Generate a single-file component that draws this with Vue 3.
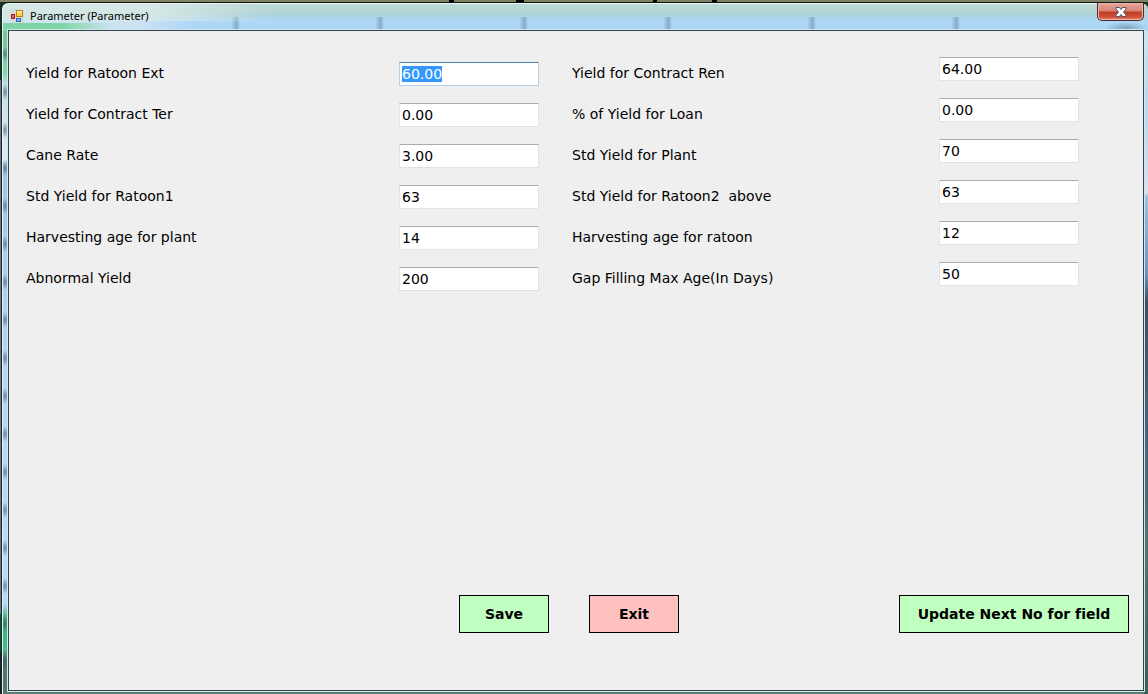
<script setup>
import { onMounted, reactive } from 'vue'

const fields = reactive([
  { id: 'ratoon-ext', label: 'Yield for Ratoon Ext', value: '60.00' },
  { id: 'contract-ren', label: 'Yield for Contract Ren', value: '64.00' },
  { id: 'contract-ter', label: 'Yield for Contract Ter', value: '0.00' },
  { id: 'loan', label: '% of Yield for Loan', value: '0.00' },
  { id: 'cane-rate', label: 'Cane Rate', value: '3.00' },
  { id: 'std-plant', label: 'Std Yield for Plant', value: '70' },
  { id: 'std-ratoon1', label: 'Std Yield for Ratoon1', value: '63' },
  { id: 'std-ratoon2', label: 'Std Yield for Ratoon2  above', value: '63' },
  { id: 'age-plant', label: 'Harvesting age for plant', value: '14' },
  { id: 'age-ratoon', label: 'Harvesting age for ratoon', value: '12' },
  { id: 'abnormal', label: 'Abnormal Yield', value: '200' },
  { id: 'gap-age', label: 'Gap Filling Max Age(In Days)', value: '50' },
])

// The first field opens focused with its value selected.
onMounted(() => {
  const first = document.getElementById(fields[0].id)
  first.focus()
  first.select()
})
</script>

<template>
  <div class="desktop">
    <svg class="marks" viewBox="0 0 1148 2" preserveAspectRatio="none" aria-hidden="true">
      <path d="M449 0h5v2h-5zM516 0h8v2h-8zM653 0h4v2h-4zM712 0h5v2h-5z" />
    </svg>
    <section class="window">
      <header class="titlebar">
        <svg class="app-icon" viewBox="0 0 14 14" aria-hidden="true">
          <rect x="0" y="0" width="14" height="14" fill="#d3d8d8" opacity=".8" />
          <rect x="6.5" y="1.5" width="6" height="6" fill="#ffcf42" stroke="#b98612" />
          <path d="M7 2h5v2H7z" fill="#ffe998" />
          <rect x="1.500" y="5.500" width="3" height="4" fill="#e8665c" stroke="#a61b17" />
          <rect x="6.500" y="9.500" width="4" height="3" fill="#7fb0f8" stroke="#316bc4" />
        </svg>
        <h1 class="title">Parameter (Parameter)</h1>
        <button class="close" type="button" aria-label="Close">
          <svg viewBox="0 0 12 10" width="12" height="10" aria-hidden="true">
            <path d="M1 .5h3.5L6 2.5 7.5.5H11V2L8.5 5 11 8v1.500H7.500L6 7.500l-1.500 2H1V8l2.500-3L1 2z" fill="#fff" stroke="#50566a" />
          </svg>
        </button>
      </header>
      <form class="panel" @submit.prevent>
        <div class="fields">
          <template v-for="f in fields" :key="f.id">
            <label class="label" :for="f.id">{{ f.label }}</label>
            <input :id="f.id" v-model="f.value" class="input" type="text" autocomplete="off" />
          </template>
        </div>
        <footer class="actions">
          <button class="action save" type="submit">Save</button>
          <button class="action exit" type="button">Exit</button>
          <button class="action update" type="button">Update Next No for field</button>
        </footer>
      </form>
    </section>
  </div>
</template>

<style>
body {
  margin: 0;
}
</style>

<style scoped>
.desktop {
  box-sizing: border-box;
  display: flex;
  min-height: 100vh;
  padding: 2px 0 0 1px;
  position: relative;
  overflow: hidden;
  background:
    linear-gradient(#7f8163, #7f8163) 0 0 / 100% 2px no-repeat,
    linear-gradient(#16351f 0 80px, #6d7780 80px 614px, #14532f 614px 652px, #1b2520 652px);
}
.marks {
  position: absolute;
  left: 0;
  top: 0;
  width: 100%;
  height: 2px;
}
.window {
  box-sizing: border-box;
  flex: 1;
  display: flex;
  flex-direction: column;
  padding: 0 4px 3px 6px;
  border-top: 1px solid #11170f;
  border-left: 1px solid #18242a;
  border-radius: 7px 7px 0 0;
  box-shadow: inset 1px 1px 0 #e9f5f2;
  background:
    radial-gradient(ellipse at center, #5f7f9199, #5f7f9100 70%) 100% 19px / 44px 12px no-repeat,
    linear-gradient(90deg, #dcebe8cc, #dcebe8cc 150px, #dcebe800 270px) 0 0 / 100% 18px no-repeat,
    linear-gradient(90deg, #7ed6a6 0 60px, #7ed6a600 110px) 0 20px / 100% 8px no-repeat,
    linear-gradient(90deg, #d4e8e8dd, #d4e5f1bb 140px, #d4e5f100 190px) 0 18px / 100% 10px no-repeat,
    repeating-linear-gradient(90deg, #6f8ea000 0 135px, #6f8ea088 140px 141px, #6f8ea000 144px) 94px 14px / 870px 14px no-repeat,
    linear-gradient(#bcdad8 0, #b4d5d2 9px, #acd3e2 13px, #afd8f8 18px, #abd5f8 28px) 0 0 / 100% 28px no-repeat,
    radial-gradient(ellipse 5px 8px, #3c577199, #3c577100) 0 32px / 6px 38px repeat-y,
    linear-gradient(#75c592 27px, #82d9ab 70px, #c3dce9 82px, #dcebf5 155px, #a5c5e4 164px, #b8d5f1 360px, #b8daf9 600px, #3bad79 616px, #45bd86 646px, #57766e 656px) 0 0 / 7px 100% no-repeat,
    linear-gradient(#c9e4f4 27px, #b9d8ef 110px, #d5e1f1 190px, #9dbfe2 194px, #6994bf 270px, #3c5065 300px, #49667d 450px, #547471 550px, #3b625c 670px) 100% 0 / 4px 100% no-repeat,
    #5b7f73;
}
.titlebar {
  display: flex;
  align-items: flex-start;
  height: 27px;
  padding-left: 2px;
}
.app-icon {
  width: 14px;
  height: 14px;
  margin-top: 6px;
}
.title {
  flex: 1;
  margin: 4px 0 0 6px;
  font: 400 11px/18px "Noto Sans", sans-serif;
  color: #000;
}
.close {
  box-sizing: border-box;
  display: flex;
  align-items: center;
  justify-content: center;
  width: 47px;
  height: 18px;
  padding: 0;
  border: 1px solid #4a2b2b;
  border-top: 0;
  border-radius: 0 0 5px 5px;
  box-shadow: inset 0 0 0 1px #eab8ae;
  background: linear-gradient(#e5a69c, #d98275 8px, #bf3b25 9px, #cf5136 14px, #e28b72);
}
.panel {
  flex: 1;
  display: flex;
  flex-direction: column;
  padding: 26px 14px 57px 17px;
  border: 1px solid #2e444f;
  outline: 1px solid #d3e6ea;
  background: #efefef;
  font-family: "DejaVu Sans", sans-serif;
}
.fields {
  display: grid;
  grid-template-columns: 373fr 140px 33px 367fr 140px 50px;
  grid-auto-rows: 41px;
  align-items: start;
}
.label {
  font-size: 14px;
  line-height: 32px;
  color: #000;
  white-space: pre;
}
.label:nth-of-type(even) {
  grid-column: 4;
}
.label:nth-of-type(odd) {
  grid-column: 1;
}
.input {
  box-sizing: border-box;
  width: 100%;
  height: 24px;
  padding: 0 2px;
  border: 1px solid #dfe4e9;
  border-top-color: #a9abb3;
  border-radius: 1px;
  outline: none;
  background: #fff;
  color: #000;
  font: 14px/18px "DejaVu Sans", sans-serif;
}
.input:nth-of-type(odd) {
  margin-top: 5px;
}
.input:focus {
  border-color: #4f7dad #b5cfe7 #b5cfe7;
}
.input::selection {
  background: #3399ff;
  color: #fff;
}
.actions {
  display: flex;
  gap: 40px;
  margin-top: auto;
  padding-left: 433px;
}
.action {
  box-sizing: border-box;
  width: 90px;
  height: 38px;
  padding: 0 4px;
  border: 1px solid #000;
  border-radius: 0;
  color: #000;
  font: bold 14px/18px "DejaVu Sans", sans-serif;
  font-variant-ligatures: none;
}
.save,
.update {
  background: #c0ffc0;
}
.exit {
  background: #ffc0c0;
}
.update {
  width: 230px;
  margin-left: auto;
}
</style>
